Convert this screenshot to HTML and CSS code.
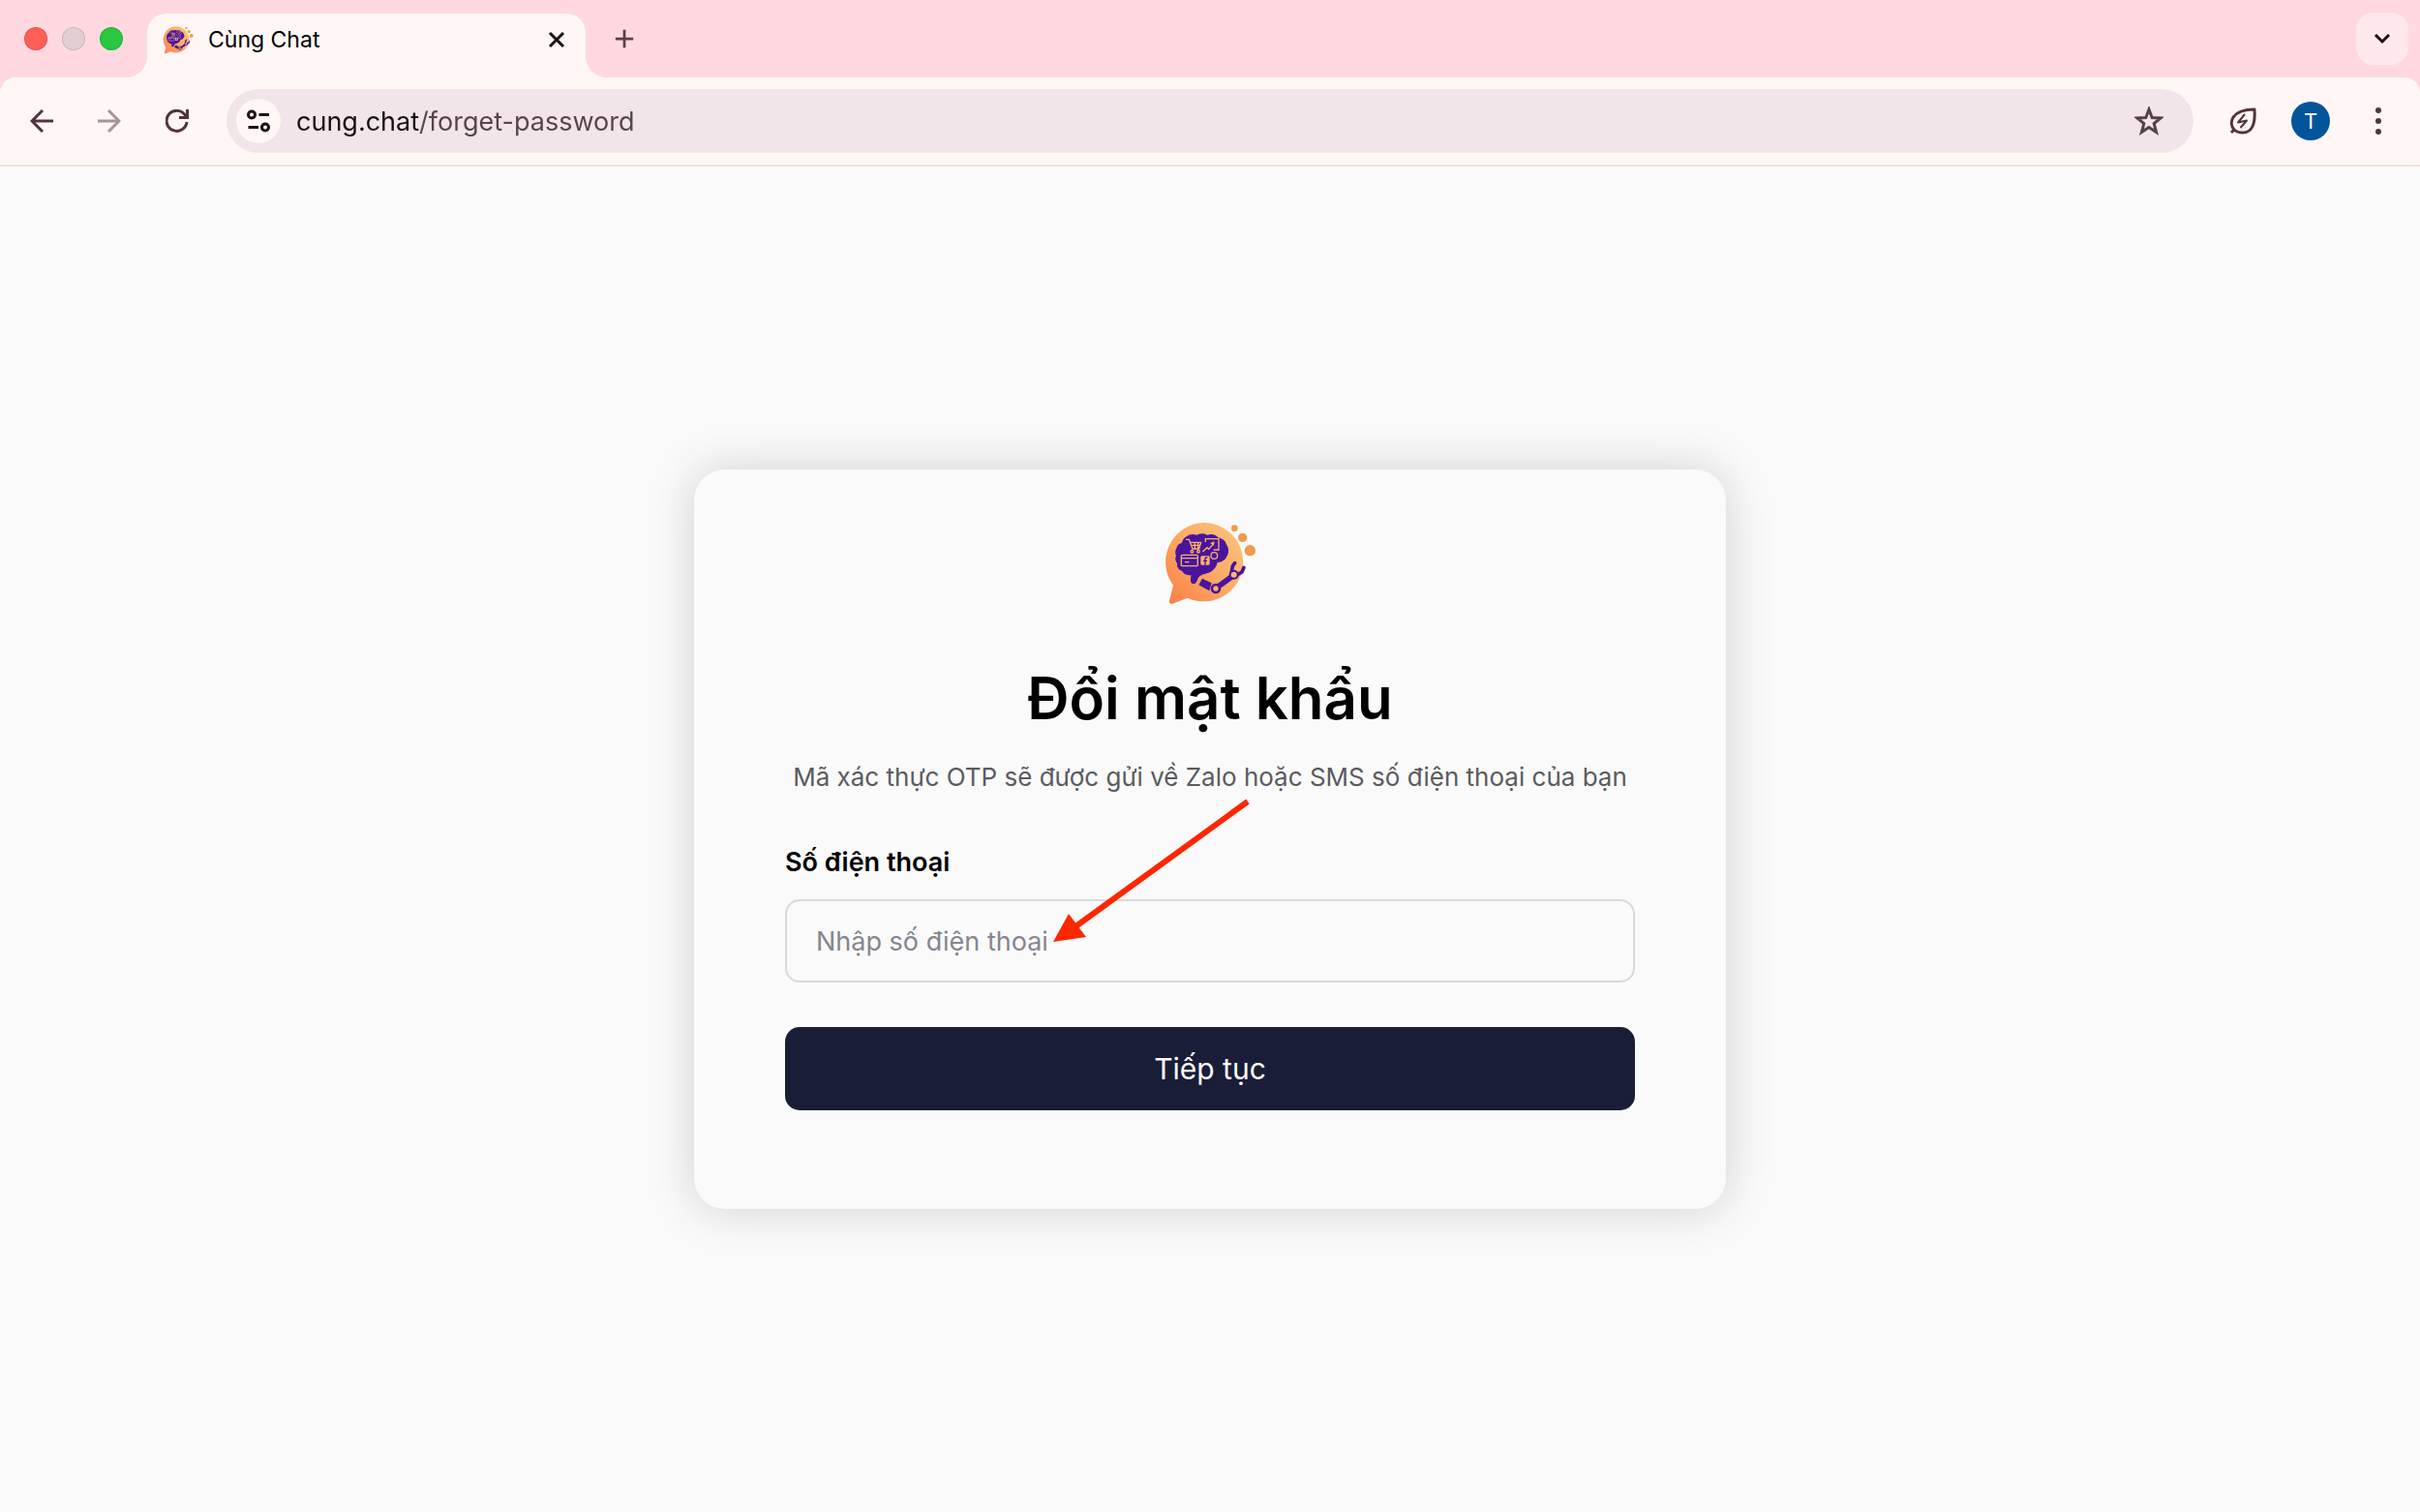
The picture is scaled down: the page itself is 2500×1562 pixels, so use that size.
FILE: index.html
```
<!DOCTYPE html>
<html lang="vi">
<head>
  <meta charset="UTF-8">
  <meta name="viewport" content="width=device-width, initial-scale=1.0">
  <title>Cùng Chat</title>
  <link rel="stylesheet" href="styles.css">
</head>
<body>
  <svg class="defs" aria-hidden="true">
    <linearGradient id="bubble" x1="1" y1="0" x2="0" y2="1">
      <stop offset="0" stop-color="#fbc47c"/>
      <stop offset="0.45" stop-color="#fcae68"/>
      <stop offset="1" stop-color="#fb7d45"/>
    </linearGradient>
    <symbol id="logo" viewBox="66 39 288 288">
      <path fill="url(#bubble)" d="M190 60a122 122 0 1 1-50 233l-46 18q-12 3-10-9l12-48A122 122 0 0 1 190 60z"/>
      <g fill="#f2994a">
        <circle cx="286" cy="77" r="10"/><circle cx="311" cy="106" r="14"/><circle cx="334" cy="146" r="17"/>
      </g>
      <path fill="#48159c" d="M137 103q14-11 32-5 18-8 32 0 22-7 34 8 20 4 25 19 12 18 4 36-8 20-31 22-5 26-32 34-18 3-26 12l-8 16q-5 7-13 3-5-3-4-10l1-15q-20 1-27-13-18-6-16-24-9-11-3-23-6-14 2-26 3-12 16-14 2-13 14-20z"/>
      <g fill="none" stroke="#fbb06b" stroke-width="4">
        <path d="M135 112h10l11 29h20l6-20h-33M150 130h30M163 121v19M173 121v19"/>
        <circle cx="154" cy="149" r="4"/><circle cx="174" cy="149" r="4"/>
        <path d="M196 120v-10h41v34h-16M187 150l14-13 5 5 16-18"/>
        <rect x="121" y="160" width="51" height="34" rx="3"/>
        <path d="M121 170h51M132 182h13"/>
        <circle cx="223" cy="162" r="10"/>
      </g>
      <path fill="#fbb06b" d="M224 118l-3 14-10-9z"/>
      <rect x="181" y="163" width="28" height="28" rx="4" fill="#fbb06b"/>
      <path fill="none" stroke="#48159c" stroke-width="4" d="M202 168h-3q-4 0-4 5v18M189 178h12"/>
      <path fill="#48159c" d="M186 233l29 14-7 24-33-18z"/>
      <path fill="none" stroke="#48159c" stroke-width="17" d="M230 262l52-38"/>
      <path fill="none" stroke="#48159c" stroke-width="11" stroke-linecap="round" d="M277 213l3-18 7-10M296 220l13-7 6-14"/>
      <circle cx="228" cy="264" r="16" fill="#48159c"/><circle cx="228" cy="264" r="8" fill="#fcae68"/>
      <circle cx="284" cy="221" r="15" fill="#48159c"/><circle cx="284" cy="221" r="9" fill="#fcb873"/>
    </symbol>
  </svg>

  <header class="browser">
    <div class="tab-strip">
      <div class="lights">
        <span class="light red"></span>
        <span class="light grey"></span>
        <span class="light green"></span>
      </div>
      <div class="tab">
        <svg class="favicon"><use href="#logo"/></svg>
        <span class="tab-title">Cùng Chat</span>
        <button class="tab-close" type="button" aria-label="Close tab">
          <svg viewBox="0 0 24 24"><path d="M5 5l14 14M19 5L5 19"/></svg>
        </button>
      </div>
      <button class="new-tab" type="button" aria-label="New tab">
        <svg viewBox="0 0 24 24"><path d="M12 2v20M2 12h20"/></svg>
      </button>
      <button class="tab-search" type="button" aria-label="Search tabs">
        <svg viewBox="0 0 24 24"><path d="M5 8l7 7 7-7"/></svg>
      </button>
    </div>

    <nav class="toolbar">
      <button class="tool" type="button" aria-label="Back">
        <svg viewBox="0 0 24 24"><path d="M24 12H2M13 1L2 12l11 11"/></svg>
      </button>
      <button class="tool disabled" type="button" aria-label="Forward" disabled>
        <svg viewBox="0 0 24 24"><path d="M0 12h22M11 1l11 11-11 11"/></svg>
      </button>
      <button class="tool" type="button" aria-label="Reload">
        <svg viewBox="0 0 24 24"><path d="M22 13a10.500 10.500 0 1 1-2.500-8L22 8.500M22.500 0v8.500H14"/></svg>
      </button>
      <div class="omnibox">
        <button class="site-info" type="button" aria-label="Site information">
          <svg viewBox="0 0 24 24"><circle cx="5" cy="5.500" r="3.500"/><circle cx="19" cy="18.500" r="3.500"/><path d="M12.500 5.500H23M1.500 18.500H12"/></svg>
        </button>
        <input class="url" type="text" value="cung.chat/forget-password" aria-label="Address">
        <button class="star" type="button" aria-label="Bookmark">
          <svg viewBox="0 0 30 30"><path d="M15 3l3.200 8.500 9 .4-7 5.700 2.400 8.900L15 21.500l-7.600 5 2.400-8.900-7-5.700 9-.4z"/></svg>
        </button>
      </div>
      <button class="tool" type="button" aria-label="Energy saver">
        <svg class="leaf" viewBox="0 0 28 28"><path d="M2 26l3-3M5 23C-1 16 2 2 26 2c1 14-2 24-12 24-4 0-7-1-9-3z"/><path class="bolt" d="M16 7l-7 8.500 9-2-6.500 7.500"/></svg>
      </button>
      <button class="avatar" type="button" aria-label="Profile">T</button>
      <button class="tool menu" type="button" aria-label="Menu">
        <svg viewBox="0 0 28 28"><circle cx="14" cy="3" r="3"/><circle cx="14" cy="14" r="3"/><circle cx="14" cy="25" r="3"/></svg>
      </button>
    </nav>
  </header>

  <main class="page">
    <form class="card">
      <svg class="logo" role="img" aria-label="Cùng Chat"><use href="#logo"/></svg>
      <h1>Đổi mật khẩu</h1>
      <p class="desc">Mã xác thực OTP sẽ được gửi về Zalo hoặc SMS số điện thoại của bạn</p>
      <div class="field">
        <label for="phone">Số điện thoại</label>
        <input id="phone" type="tel" placeholder="Nhập số điện thoại">
        <svg class="arrow" viewBox="0 0 206 152" aria-hidden="true">
          <path d="M203 5L24 135" stroke="#ff2600" stroke-width="6"/>
          <path d="M2 150l16-29 18 24z" fill="#ff2600"/>
        </svg>
      </div>
      <button class="submit" type="submit">Tiếp tục</button>
    </form>
  </main>
</body>
</html>
```

FILE: styles.css
```
* { box-sizing: border-box; margin: 0; padding: 0; }
body {
  display: flex;
  flex-direction: column;
  min-height: 100vh;
  font-family: Inter, "Noto Sans", sans-serif;
  background-color: #fafafa;
  color: #000;
}
button, input { font: inherit; border: none; background: none; }
button { display: flex; align-items: center; justify-content: center; }
svg { fill: none; stroke-linejoin: miter; }
.defs { position: absolute; width: 0; height: 0; }

/* browser window */
.browser { background-color: #ffd9df; border-bottom: 2px solid #f4dde0; }
.tab-strip {
  display: flex;
  align-items: center;
  height: 80px;
  padding: 0 12px 0 25px;
}
.lights { display: flex; gap: 15px; width: 127px; }
.light {
  width: 24px;
  height: 24px;
  border-radius: 50%;
  border: 1px solid rgba(0, 0, 0, 0.12);
}
.red { background-color: #ff5f57; }
.grey { background-color: #e3cfd2; }
.green { background-color: #28c840; }
.tab {
  position: relative;
  align-self: flex-end;
  display: flex;
  align-items: center;
  width: 453px;
  height: 66px;
  padding: 0 18px 12px 16px;
  border-radius: 20px 20px 0 0;
  background-color: #fff7f6;
}
.tab::before, .tab::after {
  content: "";
  position: absolute;
  bottom: 0;
  width: 22px;
  height: 22px;
}
.tab::before {
  left: -22px;
  background: radial-gradient(circle at 0 0, transparent 22px, #fff7f6 22px);
}
.tab::after {
  right: -22px;
  background: radial-gradient(circle at 100% 0, transparent 22px, #fff7f6 22px);
}
.favicon { width: 32px; height: 32px; }
.tab-title { flex: 1; margin-left: 15px; font-size: 23px; }
.tab-close svg, .new-tab svg, .tab-search svg {
  width: 24px;
  height: 24px;
  stroke: #1f1013;
  stroke-width: 3;
}
.new-tab { width: 48px; height: 48px; margin-left: 16px; }
.new-tab svg { width: 22px; height: 22px; stroke: #5b3f44; }
.tab-search {
  width: 54px;
  height: 54px;
  margin-left: auto;
  border-radius: 18px;
  background-color: #ffe9ec;
}

.toolbar {
  display: flex;
  align-items: center;
  gap: 22px;
  height: 90px;
  padding: 0 19px;
  border-radius: 16px 16px 0 0;
  background-color: #fff7f6;
}
.tool { width: 48px; height: 48px; }
.tool svg { width: 24px; height: 24px; stroke: #52343a; stroke-width: 3; }
.tool.disabled { opacity: 0.5; }
.omnibox {
  flex: 1;
  display: flex;
  align-items: center;
  height: 66px;
  margin: 0 5px;
  padding: 0 31px 0 10px;
  border-radius: 33px;
  background-color: #f1e5e9;
}
.site-info {
  width: 46px;
  height: 46px;
  border-radius: 50%;
  background-color: #fff7f6;
}
.site-info svg { width: 24px; height: 24px; stroke: #1f1013; stroke-width: 3; }
.url {
  flex: 1;
  min-width: 0;
  height: 66px;
  margin-left: 16px;
  font-size: 27px;
  color: #54454b;
  /* host part is darker than the path */
  background: linear-gradient(to right, #160f12 128px, #54454b 128px);
  background-clip: text;
  -webkit-background-clip: text;
  -webkit-text-fill-color: transparent;
  outline: none;
}
.star svg { width: 30px; height: 30px; stroke: #52434a; stroke-width: 3; }
.tool .leaf { width: 28px; height: 28px; stroke-linejoin: round; }
.tool .bolt { stroke-width: 2; }
.avatar {
  width: 40px;
  height: 40px;
  margin: 0 4px;
  border-radius: 50%;
  background-color: #03559b;
  color: #fff;
  font-size: 22px;
}
.tool.menu svg { width: 28px; height: 28px; fill: #52343a; stroke: none; }

/* page content */
.page {
  flex: 1;
  display: flex;
  align-items: center;
  justify-content: center;
  padding: 32px;
}
.card {
  display: flex;
  flex-direction: column;
  align-items: center;
  width: 100%;
  max-width: 1066px;
  padding: 48px 94px 102px;
  border-radius: 32px;
  background-color: #fafafa;
  box-shadow: 0 0 50px rgba(0, 0, 0, 0.17);
}
.logo { width: 96px; height: 96px; }
h1 {
  margin-top: 56px;
  font-size: 60px;
  font-weight: 600;
  line-height: 72px;
  text-align: center;
}
.desc {
  margin-top: 26px;
  font-size: 26px;
  line-height: 40px;
  color: #5b5b60;
  text-align: center;
}
.field {
  position: relative;
  display: flex;
  flex-direction: column;
  gap: 18px;
  width: 100%;
  margin-top: 48px;
}
.field label { font-size: 27px; font-weight: 600; line-height: 40px; }
.field input {
  height: 86px;
  padding: 0 30px;
  border: 2px solid #d9d9dc;
  border-radius: 15px;
  font-size: 27px;
}
.field input::placeholder { color: #85868e; }
.arrow {
  position: absolute;
  left: 275px;
  bottom: 40px;
  width: 206px;
  height: 152px;
}
.submit {
  width: 100%;
  height: 86px;
  margin-top: 46px;
  border-radius: 15px;
  background-color: #1a1d37;
  color: #fff;
  font-size: 30px;
}
```
